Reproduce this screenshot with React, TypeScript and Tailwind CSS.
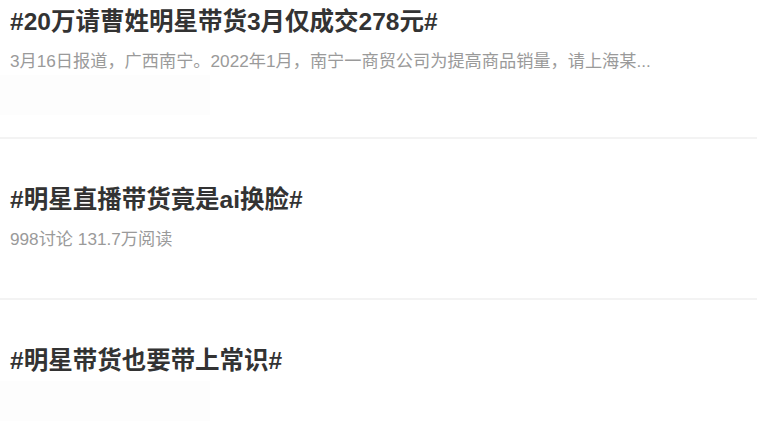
const font = { fontFamily: '"Liberation Sans", "Noto Sans CJK SC", sans-serif' }

interface Topic {
  title: string
  desc?: string
  thumb?: boolean
}

const topics: Topic[] = [
  {
    title: '#20万请曹姓明星带货3月仅成交278元#',
    desc: '3月16日报道，广西南宁。2022年1月，南宁一商贸公司为提高商品销量，请上海某...',
    thumb: true,
  },
  {
    title: '#明星直播带货竟是ai换脸#',
    desc: '998讨论 131.7万阅读',
  },
  {
    title: '#明星带货也要带上常识#',
    thumb: true,
  },
]

export default function App() {
  return (
    <div className="w-[757px] h-[427px] bg-white overflow-hidden" style={font}>
      {topics.map((t, i) => (
        <div key={i}>
          {i > 0 && <div className="h-[2px] bg-[#f3f3f3]" />}
          <div className={`pl-[10px] flex flex-col ${i === 0 ? 'pt-[6px] h-[137px]' : 'pt-[45px] h-[159px]'}`}>
            <div className="text-[24.5px] leading-[32px] font-bold text-[#333333] whitespace-nowrap">
              {t.title}
            </div>
            {t.desc && (
              <div className="mt-[11px] text-[17.2px] leading-[24px] text-[#9a9a9a] whitespace-nowrap">
                {t.desc}
              </div>
            )}
            {t.thumb && (
              <div className={`${t.desc ? 'mt-[2px]' : 'mt-[4px]'} -ml-[10px] w-[210px] h-[40px] bg-[#fdfdfd]`} />
            )}
          </div>
        </div>
      ))}
    </div>
  )
}
